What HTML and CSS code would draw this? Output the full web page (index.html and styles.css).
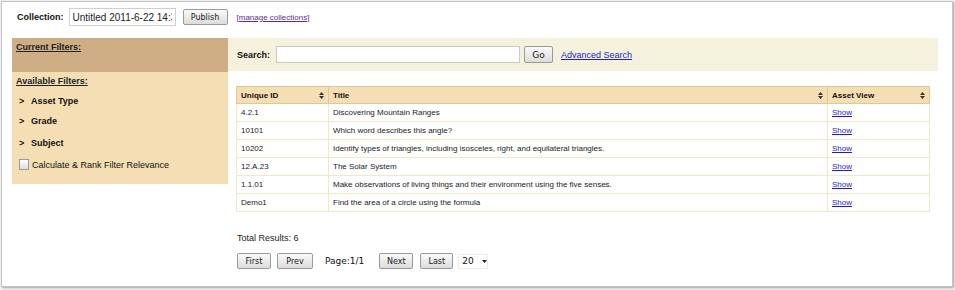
FILE: index.html
```html
<!DOCTYPE html>
<html lang="en">
<head>
  <meta charset="UTF-8" />
  <title>Search</title>
  <link rel="stylesheet" href="styles.css">
</head>
<body>
  <div class="window">
    <div class="collection-bar">
      <strong>Collection:</strong>
      <input class="collection-name" type="text" value="Untitled 2011-6-22 14:32">
      <button class="btn">Publish</button>
      <a href="#" class="manage-link">[manage collections]</a>
    </div>

    <div class="layout">
      <div class="sidebar">
        <div class="current-filters">
          <a href="#">Current Filters:</a>
        </div>
        <div class="available-filters">
          <a href="#" class="filters-title">Available Filters:</a>
          <ul class="filter-list">
            <li><span class="arrow">&gt;</span>Asset Type</li>
            <li><span class="arrow">&gt;</span>Grade</li>
            <li><span class="arrow">&gt;</span>Subject</li>
          </ul>
          <label class="relevance"><input type="checkbox"> Calculate &amp; Rank Filter Relevance</label>
        </div>
      </div>

      <div class="main">
        <div class="search-bar">
          <strong>Search:</strong>
          <input class="search-input" type="text">
          <button class="btn">Go</button>
          <a href="#" class="advanced-link">Advanced Search</a>
        </div>

        <table class="results">
          <thead>
            <tr>
              <th class="col-id"><div class="th-inner">Unique ID <svg width="5" height="7" viewBox="0 0 5 7"><path d="M2.5 0 L5 3 L0 3 Z M0 4 L5 4 L2.5 7 Z" fill="#333"/></svg></div></th>
              <th class="col-title"><div class="th-inner">Title <svg width="5" height="7" viewBox="0 0 5 7"><path d="M2.5 0 L5 3 L0 3 Z M0 4 L5 4 L2.5 7 Z" fill="#333"/></svg></div></th>
              <th class="col-view"><div class="th-inner">Asset View <svg width="5" height="7" viewBox="0 0 5 7"><path d="M2.5 0 L5 3 L0 3 Z M0 4 L5 4 L2.5 7 Z" fill="#333"/></svg></div></th>
            </tr>
          </thead>
          <tbody>
            <tr><td>4.2.1</td><td>Discovering Mountain Ranges</td><td><a href="#">Show</a></td></tr>
            <tr><td>10101</td><td>Which word describes this angle?</td><td><a href="#">Show</a></td></tr>
            <tr><td>10202</td><td>Identify types of triangles, including isosceles, right, and equilateral triangles.</td><td><a href="#">Show</a></td></tr>
            <tr><td>12.A.23</td><td>The Solar System</td><td><a href="#">Show</a></td></tr>
            <tr><td>1.1.01</td><td>Make observations of living things and their environment using the five senses.</td><td><a href="#">Show</a></td></tr>
            <tr><td>Demo1</td><td>Find the area of a circle using the formula</td><td><a href="#">Show</a></td></tr>
          </tbody>
        </table>

        <p class="total">Total Results: 6</p>
        <div class="pager">
          <button class="btn">First</button>
          <button class="btn">Prev</button>
          <span class="page-num">Page:1/1</span>
          <button class="btn">Next</button>
          <button class="btn">Last</button>
          <div class="page-size">20 <svg width="5" height="3" viewBox="0 0 5 3"><path d="M0 0 L5 0 L2.5 3 Z" fill="#222"/></svg></div>
        </div>
      </div>
    </div>
  </div>
</body>
</html>
```

FILE: styles.css
```css
* {
  box-sizing: border-box;
  margin: 0;
  padding: 0;
}
body {
  font-family: "Liberation Sans", Arial, sans-serif;
  background: #f4f4f4;
  color: #111;
  width: 955px;
  height: 290px;
  overflow: hidden;
}
.window {
  margin: 1px 0 0 1px;
  width: 952px;
  height: 286px;
  background: #fff;
  border: 1px solid #c4c4c4;
  box-shadow: 1px 1px 2px rgba(0, 0, 0, 0.35);
  padding: 6px 0 0 10px;
}
.collection-bar {
  display: flex;
  align-items: center;
  height: 18px;
  padding-left: 5px;
  font-size: 9px;
}
.collection-name {
  margin-left: 5px;
  width: 107px;
  height: 18px;
  border: 1px solid #d0d0d0;
  padding: 0 3px;
  font-family: "Liberation Sans", Arial, sans-serif;
  font-size: 10px;
  color: #222;
}
.btn {
  font-family: "DejaVu Sans", sans-serif;
  font-size: 8px;
  color: #222;
  height: 16px;
  padding: 0 8px;
  border: 1px solid #9a9a9a;
  border-radius: 2px;
  background: linear-gradient(#fafafa, #dcdcdc);
}
.collection-bar .btn {
  margin-left: 7px;
  width: 45px;
  padding: 0;
}
.manage-link {
  margin-left: 9px;
  font-size: 8px;
  color: #5a2d8c;
}
.layout {
  display: flex;
  margin-top: 12px;
}
.sidebar {
  width: 216px;
  font-size: 9px;
}
.sidebar a {
  color: #222;
  font-weight: bold;
}
.current-filters {
  background: #cfae86;
  height: 34px;
  padding: 4px 4px;
}
.available-filters {
  background: #f5deb3;
  height: 112px;
  padding: 4px 4px;
}
.filters-title {
  display: block;
  line-height: 10px;
}
.filter-list {
  list-style: none;
  margin-top: 5px;
}
.filter-list li {
  font-weight: bold;
  height: 20px;
  line-height: 20px;
}
.filter-list li:last-child {
  line-height: 24px;
  height: 22px;
}
.arrow {
  display: inline-block;
  width: 15px;
  padding-left: 3px;
}
.relevance {
  display: flex;
  align-items: center;
  gap: 3px;
  margin-top: 6px;
  padding-left: 3px;
}
.relevance input {
  appearance: none;
  width: 10px;
  height: 11px;
  border: 1px solid #9a9a9a;
  background: linear-gradient(#fff, #dedede);
}
.main {
  width: 710px;
}
.search-bar {
  display: flex;
  align-items: center;
  height: 33px;
  background: #f4f2dc;
  padding-left: 9px;
  font-size: 9px;
}
.search-input {
  margin-left: 6px;
  width: 244px;
  height: 17px;
  border: 1px solid #c8c8c8;
  background: #fff;
}
.search-bar .btn {
  margin-left: 4px;
  width: 29px;
  height: 17px;
  padding: 0;
  font-size: 9px;
}
.advanced-link {
  margin-left: 8px;
  color: #1c1cc8;
  font-size: 9px;
}
.results {
  margin: 15px 0 0 8px;
  width: 694px;
  border-collapse: collapse;
  font-size: 8px;
}
.results th {
  background: #f5deb3;
  border: 1px solid #e4c693;
  height: 17px;
  padding: 0 4px;
  text-align: left;
}
.th-inner {
  display: flex;
  justify-content: space-between;
  align-items: center;
}
.col-id { width: 92px; }
.col-view { width: 102px; }
.results td {
  border: 1px solid #f1e8c4;
  height: 18px;
  padding: 0 4px;
  color: #222;
}
.results td a {
  color: #1c1cc8;
}
.total {
  margin: 21px 0 0 9px;
  font-size: 9px;
  color: #222;
}
.pager {
  display: flex;
  align-items: center;
  margin: 10px 0 0 9px;
}
.pager .btn {
  padding: 0;
}
.pager .btn:nth-child(1) { width: 34px; }
.pager .btn:nth-child(2) { width: 36px; margin-left: 6px; }
.pager .btn:nth-child(4) { width: 34px; margin-left: 15px; }
.pager .btn:nth-child(5) { width: 33px; margin-left: 7px; }
.page-num {
  margin-left: 12px;
  font-family: "DejaVu Sans", sans-serif;
  font-size: 9px;
}
.page-size {
  display: flex;
  align-items: center;
  gap: 8px;
  margin-left: 5px;
  width: 30px;
  height: 15px;
  padding-left: 3px;
  border: 1px solid #ececec;
  font-family: "DejaVu Sans", sans-serif;
  font-size: 9px;
}
```
